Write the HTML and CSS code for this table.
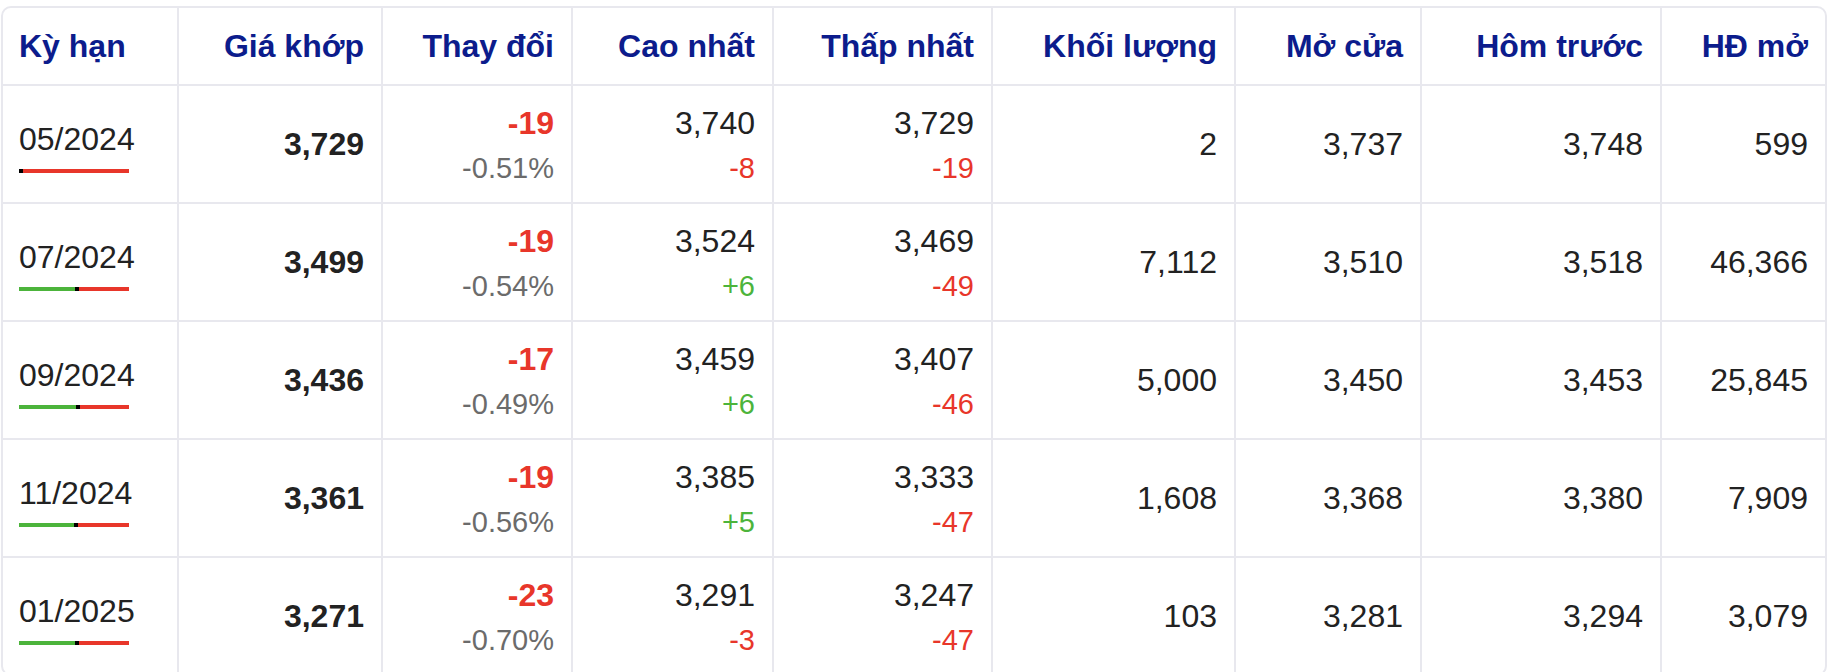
FILE: index.html
```html
<!DOCTYPE html>
<html lang="vi">
<head>
<meta charset="utf-8">
<title>Bảng giá kỳ hạn</title>
<link rel="stylesheet" href="styles.css">
</head>
<body>
<div class="board">
  <table class="quotes">
    <colgroup>
      <col class="c-term"><col class="c-match"><col class="c-chg"><col class="c-high"><col class="c-low"><col class="c-vol"><col class="c-open"><col class="c-prev"><col class="c-oi">
    </colgroup>
    <thead>
      <tr>
        <th class="left">Kỳ hạn</th>
        <th>Giá khớp</th>
        <th>Thay đổi</th>
        <th>Cao nhất</th>
        <th>Thấp nhất</th>
        <th>Khối lượng</th>
        <th>Mở cửa</th>
        <th>Hôm trước</th>
        <th>HĐ mở</th>
      </tr>
    </thead>
    <tbody>
      <tr>
        <td class="left"><div class="term">05/2024</div><div class="range"><span class="range-up" style="width:0px"></span><span class="range-mark"></span><span class="range-down"></span></div></td>
        <td><span class="strong">3,729</span></td>
        <td><div class="main strong down">-19</div><div class="sub pct">-0.51%</div></td>
        <td><div class="main">3,740</div><div class="sub down">-8</div></td>
        <td><div class="main">3,729</div><div class="sub down">-19</div></td>
        <td>2</td>
        <td>3,737</td>
        <td>3,748</td>
        <td>599</td>
      </tr>
      <tr>
        <td class="left"><div class="term">07/2024</div><div class="range"><span class="range-up" style="width:56px"></span><span class="range-mark"></span><span class="range-down"></span></div></td>
        <td><span class="strong">3,499</span></td>
        <td><div class="main strong down">-19</div><div class="sub pct">-0.54%</div></td>
        <td><div class="main">3,524</div><div class="sub up">+6</div></td>
        <td><div class="main">3,469</div><div class="sub down">-49</div></td>
        <td>7,112</td>
        <td>3,510</td>
        <td>3,518</td>
        <td>46,366</td>
      </tr>
      <tr>
        <td class="left"><div class="term">09/2024</div><div class="range"><span class="range-up" style="width:57px"></span><span class="range-mark"></span><span class="range-down"></span></div></td>
        <td><span class="strong">3,436</span></td>
        <td><div class="main strong down">-17</div><div class="sub pct">-0.49%</div></td>
        <td><div class="main">3,459</div><div class="sub up">+6</div></td>
        <td><div class="main">3,407</div><div class="sub down">-46</div></td>
        <td>5,000</td>
        <td>3,450</td>
        <td>3,453</td>
        <td>25,845</td>
      </tr>
      <tr>
        <td class="left"><div class="term">11/2024</div><div class="range"><span class="range-up" style="width:55px"></span><span class="range-mark"></span><span class="range-down"></span></div></td>
        <td><span class="strong">3,361</span></td>
        <td><div class="main strong down">-19</div><div class="sub pct">-0.56%</div></td>
        <td><div class="main">3,385</div><div class="sub up">+5</div></td>
        <td><div class="main">3,333</div><div class="sub down">-47</div></td>
        <td>1,608</td>
        <td>3,368</td>
        <td>3,380</td>
        <td>7,909</td>
      </tr>
      <tr>
        <td class="left"><div class="term">01/2025</div><div class="range"><span class="range-up" style="width:56px"></span><span class="range-mark"></span><span class="range-down"></span></div></td>
        <td><span class="strong">3,271</span></td>
        <td><div class="main strong down">-23</div><div class="sub pct">-0.70%</div></td>
        <td><div class="main">3,291</div><div class="sub down">-3</div></td>
        <td><div class="main">3,247</div><div class="sub down">-47</div></td>
        <td>103</td>
        <td>3,281</td>
        <td>3,294</td>
        <td>3,079</td>
      </tr>
    </tbody>
  </table>
</div>
</body>
</html>
```

FILE: styles.css
```css
html, body {
  margin: 0;
  padding: 0;
  overflow: hidden;
  background: #ffffff;
}

body {
  font-family: "Liberation Sans", Arial, Helvetica, sans-serif;
  color: #222222;
  padding: 6px 5px 0 1px;
}

.board {
  width: 1826px;
  box-sizing: border-box;
  border: 2px solid #e8e8ee;
  border-radius: 10px;
  overflow: hidden;
}

.quotes {
  width: 100%;
  table-layout: fixed;
  border-collapse: collapse;
  font-size: 32px;
  line-height: 1.5;
}

.c-term { width: 175px; }
.c-match { width: 204px; }
.c-chg { width: 190px; }
.c-high { width: 201px; }
.c-low { width: 219px; }
.c-vol { width: 243px; }
.c-open { width: 186px; }
.c-prev { width: 240px; }
.c-oi { width: 164px; }

.quotes th,
.quotes td {
  border: 2px solid #e8e8ee;
  padding: 13px 17px;
  text-align: right;
  vertical-align: middle;
  white-space: nowrap;
}

.quotes th {
  padding: 14px 17px;
  font-weight: bold;
  color: #0c1c8c;
}

.quotes thead tr th { border-top: none; }
.quotes tbody tr:last-child td { border-bottom: none; }
.quotes th:first-child,
.quotes td:first-child { border-left: none; }
.quotes th:last-child,
.quotes td:last-child { border-right: none; }

.quotes .left {
  text-align: left;
  padding-left: 16px;
}

.strong { font-weight: bold; }

.main {
  font-size: 32px;
  line-height: 48px;
}

.sub {
  font-size: 29px;
  line-height: 42px;
}

.pct { color: #6b6b6b; }
.down { color: #e8362a; }
.up { color: #4cb43b; }

.term {
  line-height: 48px;
}

.range {
  display: flex;
  width: 110px;
  height: 4px;
  margin-top: 6px;
}

.range-up {
  flex: none;
  height: 4px;
  background: #4cb43b;
}

.range-mark {
  flex: none;
  width: 4px;
  height: 4px;
  background: #000000;
}

.range-down {
  flex: 1;
  height: 4px;
  background: #e8362a;
}
```
